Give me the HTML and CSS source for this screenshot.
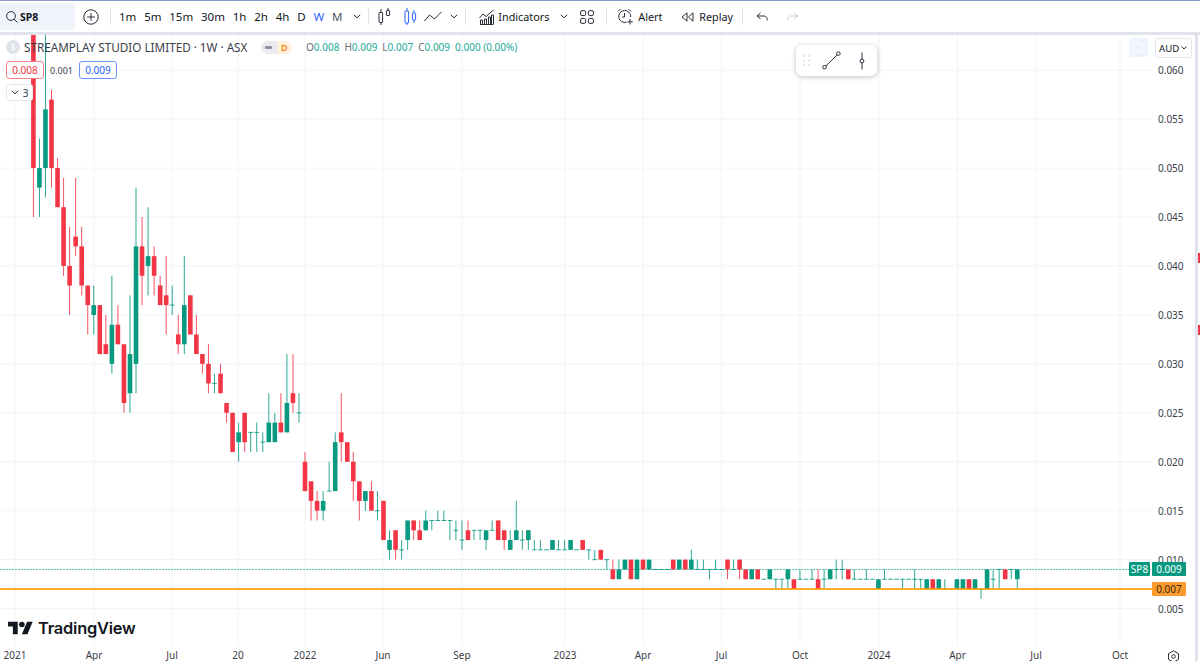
FILE: index.html
```html
<!DOCTYPE html>
<html lang="en">
<head>
<meta charset="utf-8">
<title>SP8 chart</title>
<link rel="stylesheet" href="styles.css">
</head>
<body>
<header class="toolbar">
  <div class="search">
    <svg class="ico" width="14" height="14" viewBox="0 0 14 14"><circle cx="6" cy="6" r="4.4"/><path d="M9.2 9.2 12.6 12.6"/></svg>
    <span>SP8</span>
  </div>
  <svg class="ico add" width="16" height="16" viewBox="0 0 16 16"><circle cx="8" cy="8" r="7.2"/><path d="M8 4.2v7.6M4.2 8h7.6"/></svg>
  <i class="sep sep-a"></i>
  <div class="intervals">
    <span>1m</span><span>5m</span><span>15m</span><span>30m</span><span>1h</span><span>2h</span><span>4h</span><span>D</span><span class="on">W</span><span class="m">M</span>
  </div>
  <svg class="ico chev chev-a" width="8" height="5" viewBox="0 0 8 5"><path d="M.8.8 4 3.8 7.2.8"/></svg>
  <i class="sep sep-b"></i>
  <svg class="ico bars" width="13" height="17" viewBox="0 0 13 17"><path d="M3 1v3M3 15v2M10 0v2M10 8v0"/><rect x="1" y="4.5" width="3.6" height="10" rx=".6"/><rect x="8.4" y="2.5" width="3.2" height="5" rx=".6"/></svg>
  <svg class="ico blue hollow" width="13" height="17" viewBox="0 0 13 17"><path d="M3 0v3M3 15v2M10 2v3M10 12v3"/><rect x="1" y="3" width="3.6" height="12" rx=".6"/><rect x="8.4" y="5" width="3.2" height="7" rx=".6"/></svg>
  <svg class="ico line" width="18" height="11" viewBox="0 0 18 11"><path d="M.5 10 5.5 4l5 4L17.5.8"/></svg>
  <svg class="ico chev chev-b" width="8" height="5" viewBox="0 0 8 5"><path d="M.8.8 4 3.8 7.2.8"/></svg>
  <i class="sep sep-c"></i>
  <svg class="ico ind" width="15" height="16" viewBox="0 0 15 16"><path d="M.5 9 4 5l3 2.5L14.500 1M1 15.500h13.500"/><path d="M1.500 15V11h2v4M5.500 15V10h2v5M9.500 15V8h2v7M12.500 15V6h2v9"/></svg>
  <span class="label lab-ind">Indicators</span>
  <svg class="ico chev chev-c" width="8" height="5" viewBox="0 0 8 5"><path d="M.8.8 4 3.8 7.2.8"/></svg>
  <svg class="ico layout" width="14" height="14" viewBox="0 0 14 14"><rect x=".6" y=".6" width="5" height="5" rx="1.400"/><rect x="8.400" y=".6" width="5" height="5" rx="1.400"/><rect x=".6" y="8.400" width="5" height="5" rx="1.400"/><rect x="8.400" y="8.400" width="5" height="5" rx="1.400"/></svg>
  <i class="sep sep-d"></i>
  <svg class="ico alert" width="17" height="17" viewBox="0 0 17 17"><path d="M9.500 14.200A6 6 0 1 1 13.700 9M7.500 5v4H5M1 3.500 3.500 1M11.500 1 14 3.500M13 11v5.500M10.300 13.800h5.500"/></svg>
  <span class="label lab-alert">Alert</span>
  <svg class="ico replay" width="13" height="10" viewBox="0 0 13 10"><path d="M6 .8 1 5l5 4.200zM12 .8 7.500 5l4.500 4.200z"/></svg>
  <span class="label lab-replay">Replay</span>
  <i class="sep sep-e"></i>
  <svg class="ico undo" width="12" height="9" viewBox="0 0 12 9"><path d="M4.500.8 1 4l3.500 3M1 4h7a3.200 3.200 0 0 1 3.200 3.500V8.500"/></svg>
  <svg class="ico redo" width="12" height="9" viewBox="0 0 12 9"><path d="M7.500.8 11 4 7.500 7M11 4H4A3.200 3.200 0 0 0 .8 7.500V8.500"/></svg>
</header>

<main class="workspace">
  <section class="chart">
    <div class="panes">
      <svg id="plot" class="plot" viewBox="0 35 1152 610" width="1152" height="610" aria-label="SP8 weekly candles"></svg>
      <div class="price-axis">
        <span>0.060</span><span>0.055</span><span>0.050</span><span>0.045</span><span>0.040</span><span>0.035</span><span>0.030</span><span>0.025</span><span>0.020</span><span>0.015</span><span>0.010</span><span>0.005</span>
      </div>
    </div>
    <div class="time-axis" id="time-axis">
      <svg class="ico gear" width="13" height="13" viewBox="0 0 13 13"><path d="M6.500.8 11.500 3.600v5.800L6.500 12.200 1.500 9.400V3.600z"/><circle cx="6.500" cy="6.500" r="1.800"/></svg>
    </div>

    <div class="legend">
      <div class="legend-row">
        <span class="sym-logo">S</span>
        <span class="title">STREAMPLAY STUDIO LIMITED · 1W · ASX</span>
        <span class="pill"><b class="pill-a"><i></i></b><b class="pill-d">D</b></span>
        <span class="ohlc"><em>O</em>0.008</span>
        <span class="ohlc"><em>H</em>0.009</span>
        <span class="ohlc"><em>L</em>0.007</span>
        <span class="ohlc"><em>C</em>0.009</span>
        <span class="ohlc">0.000 (0.00%)</span>
      </div>
      <div class="trade-row">
        <span class="trade sell">0.008</span>
        <span class="spread">0.001</span>
        <span class="trade buy">0.009</span>
      </div>
      <div class="collapse">
        <svg class="ico" width="8" height="5" viewBox="0 0 8 5"><path d="M.8.8 4 3.800 7.200.8"/></svg>
        <span>3</span>
      </div>
    </div>

    <div class="float-tools">
      <svg class="dots" width="7" height="11" viewBox="0 0 7 11"><g><circle cx="1" cy="1" r=".8"/><circle cx="6" cy="1" r=".8"/><circle cx="1" cy="5.500" r=".8"/><circle cx="6" cy="5.500" r=".8"/><circle cx="1" cy="10" r=".8"/><circle cx="6" cy="10" r=".8"/></g></svg>
      <svg class="ico tool-line" width="19" height="19" viewBox="0 0 19 19"><path d="M3.800 15 15.200 3.800"/><circle cx="2.600" cy="16.200" r="1.800"/><circle cx="16.400" cy="2.600" r="1.800"/></svg>
      <svg class="ico tool-v" width="6" height="18" viewBox="0 0 6 18"><path d="M3 .5v6.500M3 11v6.500"/><circle cx="3" cy="9" r="1.900"/></svg>
    </div>

    <div class="scale-btn"><i></i></div>
    <div class="currency"><span>AUD</span><svg class="ico" width="6" height="4" viewBox="0 0 6 4"><path d="M.6.6 3 3 5.400.6"/></svg></div>

    <div class="logo">
      <svg width="25" height="14" viewBox="0 4 36 18"><path d="M14 22H7V11H0V4h14v18zM28 22h-8l7.500-18h8L28 22z"/><circle cx="20" cy="8" r="4"/></svg>
      <span>TradingView</span>
    </div>

    <span class="tag tag-name">SP8</span>
    <span class="tag tag-last">0.009</span>
    <span class="tag tag-low">0.007</span>
  </section>
  <aside class="gutter"></aside>
  <aside class="edge"><i class="mark mark-a"></i><i class="mark mark-b"></i></aside>
</main>
<script src="chart.js"></script>
</body>
</html>
```
FILE: styles.css
```css
* { box-sizing: border-box; }
html, body { margin: 0; height: 661px; overflow: hidden; background: #fff; }
body { font-family: "Noto Sans", "Open Sans", sans-serif; color: #131722; font-size: 11px; }

.ico { fill: none; stroke: #2a2e39; stroke-width: 1; flex: none; display: block; }
.ico.blue { stroke: #2962ff; }

.toolbar { height: 35px; display: flex; align-items: center; border-top: 1px solid #8c9bcd; border-bottom: 3px solid #e0e3eb; font-size: 11.500px; }
.search { width: 75px; height: 27px; background: #f0f3fa; border-radius: 0 4px 4px 0; display: flex; align-items: center; gap: 1px; padding-left: 5px; font-weight: 700; font-size: 10.500px; }
.add { margin-left: 8px; }
.sep { width: 1px; height: 16px; background: #e0e3eb; flex: none; }
.sep-a { margin-left: 11px; }
.intervals { display: flex; gap: 7.800px; margin-left: 8px; }
.intervals .on { color: #2962ff; }
.intervals .m { color: #50535e; }
.chev-a { margin-left: 11px; }
.sep-b { margin-left: 7px; }
.bars { margin-left: 9px; }
.hollow { margin-left: 13px; }
.line { margin-left: 7px; }
.chev-b { margin-left: 8px; }
.sep-c { margin-left: 7px; }
.ind { margin-left: 13px; }
.label { flex: none; font-size: 10.800px; }
.lab-ind { margin-left: 4px; width: 50px; }
.chev-c { margin-left: 12px; }
.layout { margin-left: 12px; }
.sep-d { margin-left: 12px; }
.alert { margin-left: 10px; }
.lab-alert { margin-left: 4px; width: 25px; }
.replay { margin-left: 18px; }
.lab-replay { margin-left: 5px; width: 34px; }
.sep-e { margin-left: 9px; }
.undo { margin-left: 13px; }
.redo { margin-left: 19px; stroke: #c8cbd3; }

.workspace { height: 626px; display: flex; }
.chart { position: relative; width: 1195px; flex: none; }
.gutter { width: 3px; background: #e0e3eb; flex: none; }
.edge { position: relative; flex: 1; }
.mark { position: absolute; left: 0; width: 2px; height: 10px; background: #f23645; }
.mark-a { top: 218px; }
.mark-b { top: 290px; }

.panes { display: flex; height: 610px; }
.plot { display: block; flex: none; }
.price-axis { width: 43px; padding: 11.200px 0 0 6px; display: flex; flex-direction: column; font-size: 10px; color: #3a3e49; }
.price-axis span { height: 48.950px; line-height: 48.950px; flex: none; }
.time-axis { position: relative; height: 16px; font-size: 10px; color: #3a3e49; }
.time-label { position: absolute; top: 3px; transform: translateX(-50%); line-height: 14px; }
.gear { position: absolute; left: 1167px; top: 5px; }

.legend { position: absolute; left: 6px; top: 5px; }
.legend-row { display: flex; align-items: center; height: 14px; font-size: 10.500px; }
.sym-logo { width: 14px; height: 14px; border-radius: 50%; background: #e0e3eb; color: #fff; font-size: 8px; font-weight: 700; text-align: center; line-height: 14px; }
.title { margin-left: 4px; width: 237px; white-space: nowrap; color: #3a3e49; font-size: 11.700px; }
.pill { display: flex; height: 13px; border-radius: 7px; overflow: hidden; width: 31px; }
.pill b { flex: 1; display: flex; align-items: center; justify-content: center; font-size: 9px; }
.pill-a { background: #e9ebf0; }
.pill-a i { width: 7px; height: 3px; background: #8e919c; border-radius: 1px; }
.pill-d { background: #fff0dd; color: #f57c00; font-weight: 600; }
.ohlc { color: #22ab94; margin-left: 5px; font-size: 10px; white-space: nowrap; }
.pill + .ohlc { margin-left: 14px; }
.ohlc em { font-style: normal; color: #6a6d78; }
.trade-row { display: flex; align-items: center; margin-top: 7px; height: 18px; }
.trade { width: 38px; height: 18px; line-height: 16px; border: 1px solid; border-radius: 3px; background: #fff; text-align: center; font-size: 10px; }
.sell { border-color: #f7808a; color: #f23645; }
.buy { border-color: #6d93ff; color: #2962ff; }
.spread { width: 35px; text-align: center; font-size: 9px; color: #3a3e49; }
.collapse { margin-top: 5px; width: 27px; height: 17px; background: #fff; border: 1px solid #e6e8ee; border-radius: 3px; display: flex; align-items: center; justify-content: center; gap: 4px; font-size: 10px; color: #3a3e49; }

.float-tools { position: absolute; left: 796px; top: 10px; width: 81px; height: 31px; background: #fff; border-radius: 6px; box-shadow: 0 1px 5px rgba(19,23,34,.28); display: flex; align-items: center; padding-left: 7px; }
.dots { fill: #c3c5cc; flex: none; }
.tool-line { margin-left: 12px; }
.tool-v { margin-left: 18px; }

.scale-btn { position: absolute; left: 1129px; top: 3px; width: 19px; height: 19px; background: #eef3fd; border-radius: 3px; display: flex; align-items: center; justify-content: center; }
.scale-btn i { width: 11px; height: 9px; border: 1px solid #fff; border-radius: 3px; }
.currency { position: absolute; left: 1155px; top: 3px; width: 37px; height: 20px; background: #fff; border: 1px solid #e6e8ee; border-radius: 3px; display: flex; align-items: center; justify-content: space-between; padding: 0 4px 0 3px; font-size: 9.600px; }

.logo { position: absolute; left: 8px; top: 584px; display: flex; align-items: center; gap: 5px; font-family: Inter, sans-serif; font-weight: 600; font-size: 16.400px; letter-spacing: -.2px; color: #131722; line-height: 18px; }
.logo svg { fill: #131722; display: block; }

.tag { position: absolute; height: 14px; line-height: 14px; font-size: 10px; text-align: center; border-radius: 1px; }
.tag-name { left: 1129px; top: 527px; width: 21px; background: #089981; color: #fff; }
.tag-last { left: 1152px; top: 527px; width: 34px; background: #089981; color: #fff; }
.tag-low { left: 1152px; top: 547px; width: 34px; background: #ff9b2e; color: #3a2a10; }
```
FILE: chart.js
```js
// weekly candles, prices in thousandths of a dollar: [open, high, low, close]
var C = [
[65,70,45,50],[48,53,45,50],[50,65,47,56],[57,58,48,50],[50,51,46,46],[46,49,39,40],[40,44,35,38],[43,49,41,42],[42,44,37,38],[38,38,33,36],
[35,38,33,36],[36,36,31,31],[32,35,31,31],[30,39,29,34],[34,36,32,32],[32,32,25,26],[27,37,25,31],[30,48,27,42],[42,45,36,39],[40,46,37,41],
[41,42,37,39],[38,39,36,36],[37,41,33,36],[36,38,35,36],[33,35,31,32],[32,41,31,36],[37,37,33,33],[33,35,31,31],[31,31,29,30],[30,32,27,28],
[28,29,27,28],[29,30,27,27],[26,26,24,25],[25,25,21,21],[22,24,20,23],[25,25,21,22],[23,23,21,23],[23,24,21,23],[22,23,21,22],[22,27,22,24],
[22,25,22,24],[24,27,23,23],[23,31,23,26],[27,31,25,26],[25,27,24,25],[20,21,17,17],[18,18,14,16],[16,17,14,15],[15,17,14,16],[17,20,17,17],
[17,23,17,22],[23,27,20,22],[22,22,20,20],[20,21,16,18],[18,18,14,16],[16,17,15,17],[17,18,15,15],[15,17,14,15],[16,16,12,12],[11,13,10,12],
[13,13,10,11],[11,12,10,11],[12,14,11,14],[14,14,12,13],[13,14,12,12],[13,15,13,14],[14,14,13,14],[14,15,14,14],[14,15,14,14],[14,14,12,14],
[13,14,12,13],[12,14,11,12],[13,14,12,12],[13,13,12,13],[13,13,12,13],[12,13,11,13],[13,14,13,13],[14,14,12,12],[13,13,11,12],[11,13,11,12],
[12,16,12,13],[12,13,11,12],[12,13,11,13],[11,12,11,11],[11,12,11,11],[11,11,11,11],[11,12,11,12],[11,12,11,11],[11,12,11,11],[11,12,11,12],
[11,11,11,11],[12,12,11,11],[11,11,10,11],[10,11,10,10],[11,11,10,10],[10,10,9,10],[9,10,8,8],[8,10,8,9],[9,10,9,10],[10,10,8,8],
[8,10,8,10],[10,10,9,9],[9,10,9,10],[9,9,9,9],[9,9,9,9],[9,9,9,9],[10,10,9,9],[9,10,9,10],[10,10,9,9],[9,11,9,10],
[9,10,9,9],[9,10,9,9],[9,9,8,9],[9,10,9,9],[9,9,9,9],[10,10,8,9],[9,10,9,9],[10,10,8,9],[9,9,8,8],[8,9,8,9],
[9,9,8,8],[8,8,8,8],[8,9,8,9],[8,8,7,8],[8,8,7,8],[8,9,7,9],[8,8,7,7],[8,9,8,8],[8,8,8,8],[8,9,8,8],
[8,9,7,7],[8,9,7,8],[8,9,8,9],[9,10,8,9],[9,10,8,9],[9,9,8,8],[8,9,8,8],[8,8,8,8],[8,9,8,8],[8,8,8,8],
[7,8,7,8],[8,9,8,8],[8,8,8,8],[8,8,8,8],[8,8,7,8],[8,8,8,8],[8,9,7,8],[8,8,7,8],[7,8,7,8],[8,8,7,7],
[7,8,7,8],[7,8,7,7],[7,7,7,7],[7,8,7,8],[7,8,7,8],[8,8,7,7],[7,8,7,8],[7,7,6,7],[7,9,7,9],[8,9,7,8],
[9,9,7,9],[9,9,8,8],[9,9,8,9],[8,9,7,9]
];
var TIMES = [[15,'2021'],[94,'Apr'],[172,'Jul'],[238,'20'],[305,'2022'],[383,'Jun'],[462,'Sep'],[565,'2023'],[643,'Apr'],[721.5,'Jul'],[800,'Oct'],[879,'2024'],[957.5,'Apr'],[1036,'Jul'],[1120,'Oct']];
var NS = 'http://www.w3.org/2000/svg';
var GREEN = '#089981', RED = '#f23645';
var plot = document.getElementById('plot');
function y(p) { return 608.6 - (p - 5) * 9.79; }
function x(i) { return 33.4 + 6.036 * i; }
function add(tag, attrs) {
  var el = document.createElementNS(NS, tag);
  for (var k in attrs) el.setAttribute(k, attrs[k]);
  plot.appendChild(el);
  return el;
}
for (var p = 5; p <= 60; p += 5) add('rect', { x: 0, y: y(p) - 0.5, width: 1152, height: 1, fill: '#f0f3fa' });
TIMES.forEach(function (t) { add('rect', { x: t[0] - 0.5, y: 35, width: 1, height: 610, fill: '#f0f3fa' }); });
add('line', { x1: 0, x2: 1152, y1: 569.5, y2: 569.5, stroke: '#5cc4b0', 'stroke-width': 1, 'stroke-dasharray': '2 1' });
C.forEach(function (c, i) {
  var o = c[0], h = c[1], l = c[2], cl = c[3];
  var col = cl >= o ? GREEN : RED;
  var top = Math.max(o, cl), bot = Math.min(o, cl), cx = x(i);
  add('rect', { x: cx - 0.5, y: y(h), width: 1, height: y(l) - y(h), fill: col, 'fill-opacity': 0.85 });
  if (top === bot) add('rect', { x: cx - 2.3, y: y(top) - 0.5, width: 4.6, height: 1, fill: col, 'fill-opacity': 0.85 });
  else add('rect', { x: cx - 2.3, y: y(top), width: 4.6, height: y(bot) - y(top), fill: col });
});
add('rect', { x: 0, y: y(7) - 0.8, width: 1152, height: 1.6, fill: '#ff9800' });
var axis = document.getElementById('time-axis');
TIMES.forEach(function (t) {
  var s = document.createElement('span');
  s.className = 'time-label';
  s.textContent = t[1];
  s.style.left = t[0] + 'px';
  axis.appendChild(s);
});
```
